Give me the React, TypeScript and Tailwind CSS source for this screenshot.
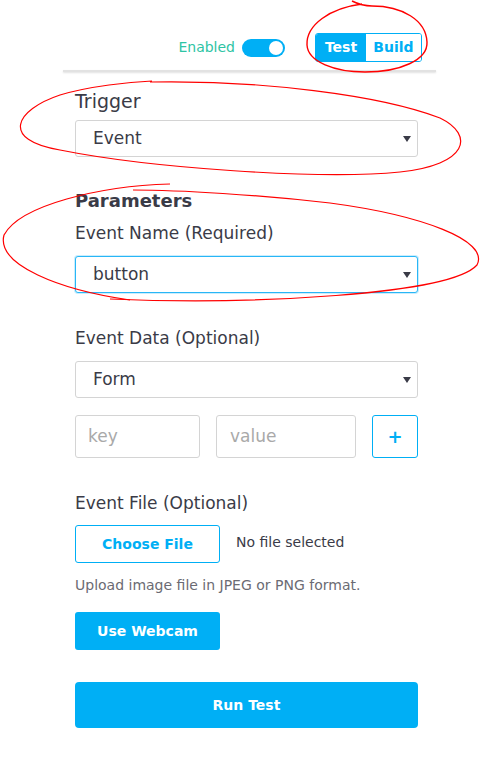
import { FC, ReactNode } from "react";

const font = { fontFamily: '"DejaVu Sans", "Open Sans", sans-serif' };

const Caret = () => (
  <svg width="8" height="6" viewBox="0 0 8 6" className="absolute right-[6px] top-1/2 -translate-y-1/2">
    <path d="M0 0h8L4 6z" fill="#3a3b47" />
  </svg>
);

type SelectProps = { value: string; active?: boolean };

const FakeSelect: FC<SelectProps> = ({ value, active }) => (
  <div
    className={
      "relative h-[37px] w-full rounded-[3px] border bg-white flex items-center pl-[17px] text-[17px] text-[#3a3b47] " +
      (active ? "border-[#29b6f6] shadow-[0_0_0_1px_rgba(41,182,246,0.25)]" : "border-[#d4d4d4]")
    }
  >
    {value}
    <Caret />
  </div>
);

const Label: FC<{ children: ReactNode; className?: string }> = ({ children, className }) => (
  <p className={"text-[17px] leading-[22px] text-[#3a3b47] " + (className || "")}>{children}</p>
);

export default function App() {
  return (
    <div className="relative w-[480px] h-[780px] bg-white" style={font}>
      {/* header */}
      <div className="flex items-center justify-end pr-[58px] pt-[33px] h-[62px]">
        <span className="text-[14px] text-[#2ec4a4] mr-[7px]">Enabled</span>
        <div className="relative w-[43px] h-[18px] rounded-full bg-[#00aff5] mr-[30px]">
          <div className="absolute right-[2px] top-[2px] w-[14px] h-[14px] rounded-full bg-white" />
        </div>
        <div className="flex h-[29px] rounded-[3px] border border-[#00aff5] overflow-hidden text-[14px] font-bold">
          <span className="w-[50px] bg-[#00aff5] text-white flex items-center justify-center">Test</span>
          <span className="w-[55px] bg-white text-[#00aff5] flex items-center justify-center">Build</span>
        </div>
      </div>
      <div className="ml-[63px] mt-[8px] w-[373px] h-[2px] bg-[#e2e2e2] shadow-[0_1px_2px_rgba(0,0,0,0.12)]" />

      <div className="pl-[75px] w-[418px]">
        <p className="mt-[17px] text-[19px] leading-[24px] text-[#3a3b47]">Trigger</p>
        <div className="mt-[7px]">
          <FakeSelect value="Event" />
        </div>

        <p className="mt-[32px] text-[18px] leading-[24px] font-bold text-[#3a3b47]">Parameters</p>
        <Label className="mt-[9px]">Event Name (Required)</Label>
        <div className="mt-[12px]">
          <FakeSelect value="button" active />
        </div>

        <Label className="mt-[34px]">Event Data (Optional)</Label>
        <div className="mt-[12px]">
          <FakeSelect value="Form" />
        </div>

        <div className="mt-[17px] flex items-center h-[43px]">
          <div className="w-[125px] h-full rounded-[3px] border border-[#d4d4d4] flex items-center pl-[12px] text-[17px] text-[#a9a9a9]">
            key
          </div>
          <div className="ml-[16px] w-[140px] h-full rounded-[3px] border border-[#d4d4d4] flex items-center pl-[13px] text-[17px] text-[#a9a9a9]">
            value
          </div>
          <div className="ml-[16px] w-[46px] h-full rounded-[3px] border border-[#00aff5] flex items-center justify-center text-[18px] font-bold text-[#00aff5]">
            +
          </div>
        </div>

        <Label className="mt-[34px]">Event File (Optional)</Label>
        <div className="mt-[11px] flex items-center h-[38px]">
          <div className="w-[145px] h-full rounded-[3px] border border-[#00aff5] flex items-center justify-center text-[14px] font-bold text-[#00aff5]">
            Choose File
          </div>
          <span className="ml-[16px] -mt-[4px] text-[14px] text-[#3a3b47]">No file selected</span>
        </div>
        <p className="mt-[13px] text-[14px] leading-[18px] text-[#6b6b73]">Upload image file in JPEG or PNG format.</p>
        <div className="mt-[18px] w-[145px] h-[38px] rounded-[3px] bg-[#00aff5] flex items-center justify-center text-[14px] font-bold text-white">
          Use Webcam
        </div>
        <div className="mt-[32px] w-full h-[46px] rounded-[4px] bg-[#00aff5] flex items-center justify-center text-[14px] font-bold text-white">
          Run Test
        </div>
      </div>

      {/* red hand-drawn annotations */}
      <svg className="absolute inset-0 pointer-events-none" width="480" height="780" viewBox="0 0 480 780" fill="none">
        <path
          d="M352 1 C358 4 364 6 372 6 C402 6 426 20 427 42 C428 60 400 72 365 72 C335 72 308 62 307 45 C306 25 330 8 362 4"
          stroke="#ff0000"
          strokeWidth="1.4"
        />
        <path
          d="M150 82 C260 80 380 95 440 118 C475 135 468 165 400 172 C320 180 150 168 60 150 C0 140 15 110 60 95 C90 86 130 82 152 81"
          stroke="#ff0000"
          strokeWidth="1.2"
        />
        <path d="M170 184 C100 186 20 205 4 235 C-4 265 60 290 130 300" stroke="#ff0000" strokeWidth="1.2" />
        <path
          d="M110 299 C250 305 450 295 477 265 C490 240 420 215 330 203 C260 195 180 190 133 190"
          stroke="#ff0000"
          strokeWidth="1.2"
        />
      </svg>
    </div>
  );
}
